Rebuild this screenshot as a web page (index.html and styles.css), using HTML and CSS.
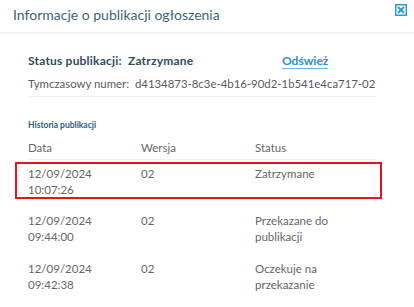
FILE: index.html
```html
<!DOCTYPE html>
<html lang="pl">
<head>
  <meta charset="UTF-8" />
  <meta name="viewport" content="width=device-width, initial-scale=1.0"/>
  <title>Informacje o publikacji ogłoszenia</title>
  <link rel="stylesheet" href="styles.css">
</head>
<body>
  <div class="modal">
    <header class="modal-head">
      <h1>Informacje o publikacji ogłoszenia</h1>
      <button class="close" aria-label="Zamknij">
        <svg width="12" height="12" viewBox="0 0 12 12">
          <rect x="0.75" y="0.75" width="10.5" height="10.5" fill="none" stroke="#2b9ad6" stroke-width="1.5"/>
          <path d="M3 3 L9 9 M9 3 L3 9" stroke="#2b9ad6" stroke-width="2"/>
        </svg>
      </button>
    </header>

    <div class="modal-body">
      <div class="status-row">
        <span class="status-label">Status publikacji:&nbsp; Zatrzymane</span>
        <a href="#" class="refresh">Odśwież</a>
      </div>
      <p class="temp-number">Tymczasowy numer:&nbsp; d4134873-8c3e-4b16-90d2-1b541e4ca717-02</p>

      <h3 class="history-title">Historia publikacji</h3>
      <div class="history">
        <div class="row head">
          <span>Data</span><span>Wersja</span><span>Status</span>
        </div>
        <div class="row current">
          <span>12/09/2024<br>10:07:26</span><span>02</span><span>Zatrzymane</span>
        </div>
        <div class="row">
          <span>12/09/2024<br>09:44:00</span><span>02</span><span>Przekazane do<br>publikacji</span>
        </div>
        <div class="row">
          <span>12/09/2024<br>09:42:38</span><span>02</span><span>Oczekuje na<br>przekazanie</span>
        </div>
      </div>
    </div>
  </div>
</body>
</html>
```

FILE: styles.css
```css
* {
  margin: 0;
  padding: 0;
  box-sizing: border-box;
  font-family: Lato, "Open Sans", sans-serif;
}

body {
  background: #fff;
  overflow: hidden;
}

.modal {
  width: 414px;
  height: 307px;
}

.modal-head {
  display: flex;
  justify-content: space-between;
  align-items: flex-start;
  height: 34px;
  padding: 4px 7px 0 13px;
  border-bottom: 2px solid #f2f2f2;
}

.modal-head h1 {
  font-size: 14px;
  font-weight: normal;
  color: #3e6474;
  margin-top: 2px;
}

.close {
  border: none;
  background: none;
  width: 12px;
  height: 12px;
  cursor: pointer;
}

.close svg {
  display: block;
}

.modal-body {
  padding: 19px 34px 0 28px;
}

.status-row {
  display: flex;
  align-items: baseline;
  height: 19px;
}

.status-label {
  width: 254px;
  font-size: 12px;
  font-weight: bold;
  color: #2f4c5c;
  letter-spacing: 0.2px;
}

.refresh {
  font-size: 12px;
  font-weight: bold;
  color: #2a90cb;
  text-decoration: none;
  border-bottom: 1px solid #6bb6e0;
  line-height: 14px;
}

.temp-number {
  font-size: 11.4px;
  color: #5a5a5a;
  padding: 5px 0 6px;
  border-bottom: 1px solid #f0f0f0;
  margin-right: 4px;
}

.history-title {
  font-size: 8.5px;
  font-weight: bold;
  color: #2e607a;
  margin-top: 23px;
}

.history {
  margin-top: 10px;
}

.row {
  display: grid;
  grid-template-columns: 113px 114px 1fr;
  font-size: 11.5px;
  color: #666;
  line-height: 15.5px;
  padding: 3px 0 0;
  margin-right: 4px;
  height: 48px;
}

.row.head {
  height: 20px;
  padding: 0;
  border-bottom: 1px solid #f0f0f0;
}

.row.current {
  height: 37px;
  margin: 2px -2px 11px -13px;
  padding: 2px 0 0 11px;
  border: 2px solid #e8141c;
}
```
